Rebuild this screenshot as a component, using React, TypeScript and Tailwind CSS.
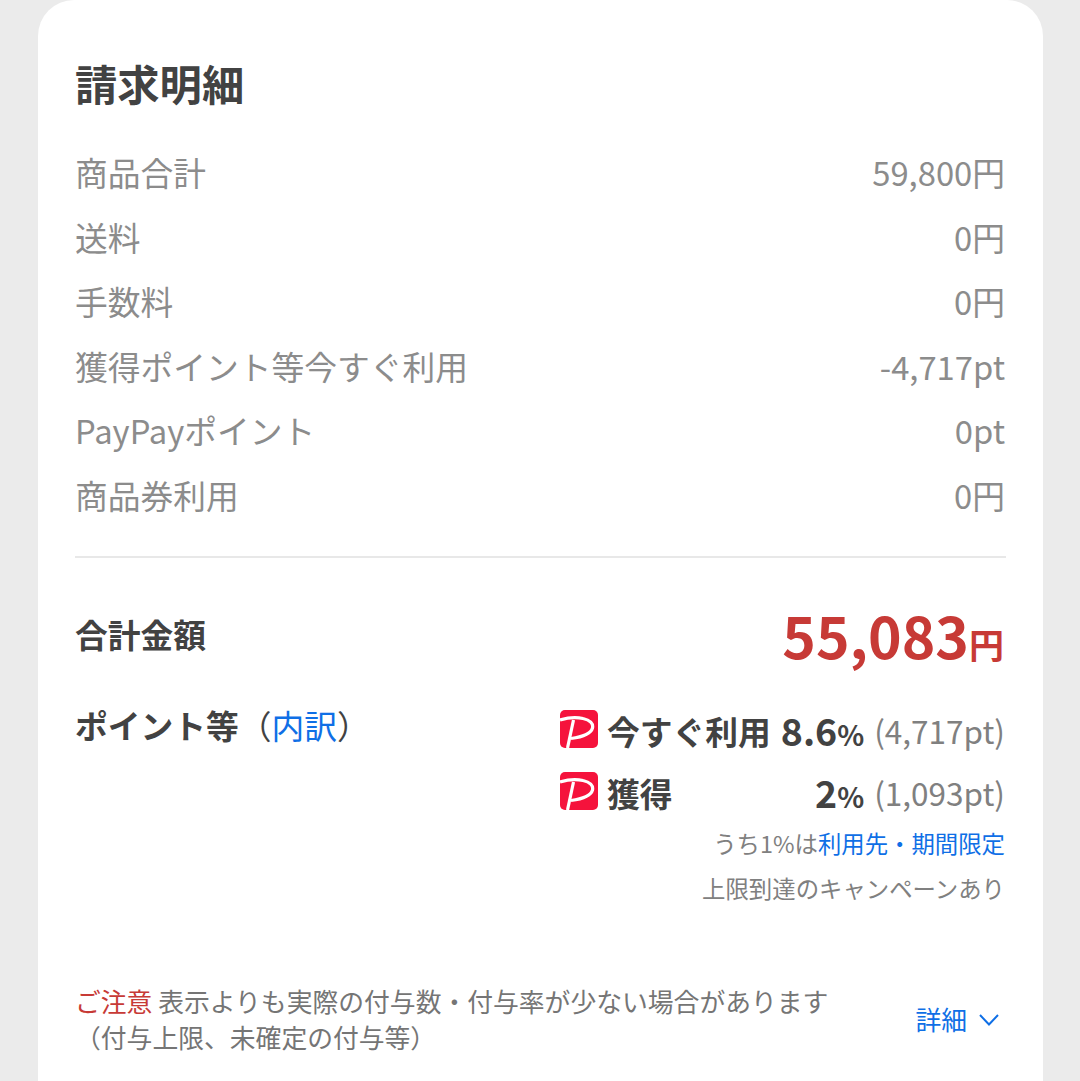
const jp = "font-['Noto_Sans_CJK_JP','Noto_Sans',sans-serif]"

const rows = [
  { label: "商品合計", value: "59,800円" },
  { label: "送料", value: "0円" },
  { label: "手数料", value: "0円" },
  { label: "獲得ポイント等今すぐ利用", value: "-4,717pt" },
  { label: "PayPayポイント", value: "0pt" },
  { label: "商品券利用", value: "0円" },
]

function PayPayIcon() {
  return (
    <svg width="38" height="38" viewBox="0 0 38 38" className="mt-[2px] shrink-0">
      <rect width="38" height="38" rx="5" fill="#f5133c" />
      <path
        d="M0 10C8 7.5 17 7 23 8.5C30 10 33.5 13.5 32.5 18C31 23.5 22 27 11 28.5"
        fill="none"
        stroke="#fff"
        strokeWidth="3.2"
      />
      <path d="M13.5 10L7.5 38" fill="none" stroke="#fff" strokeWidth="3.2" />
    </svg>
  )
}

export default function App() {
  return (
    <div className={`${jp} h-[1081px] overflow-hidden bg-[#ebebeb] pl-[38px] pr-[37px]`}>
      <div className="h-[1081px] overflow-hidden rounded-t-[36px] bg-white px-[37px] pt-[53px]">
        <h2 className="text-[42.3px] leading-[60px] font-bold text-[#424242]">請求明細</h2>

        <div className="mt-[27px] flex flex-col pr-[1px] text-[32.75px] leading-[64.6px] text-[#8c8c8c]">
          {rows.map((row) => (
            <div key={row.label} className="flex justify-between">
              <span>{row.label}</span>
              <span>{row.value}</span>
            </div>
          ))}
        </div>

        <div className="mt-[28px] h-[2px] bg-[#e8e8e8]" />

        <div className="mt-[27px] flex items-center justify-between pr-[2px]">
          <span className="pb-[4px] text-[32.75px] font-bold text-[#424242]">合計金額</span>
          <span className="pt-[14px] leading-[70px] font-bold text-[#c73a36]">
            <span className="text-[57px]">55,083</span>
            <span className="text-[35px]">円</span>
          </span>
        </div>

        <div className="mt-[10px] flex justify-between">
          <div className="pt-[3px] text-[32.75px] leading-[50px] font-bold text-[#424242]">
            ポイント等
            <span className="font-normal">（</span>
            <span className="font-normal text-[#0f6fe6]">内訳</span>
            <span className="font-normal">）</span>
          </div>

          <div className="flex w-[446px] flex-col">
            <div className="flex h-[62px] items-center pr-[1px]">
              <PayPayIcon />
              <span className="ml-[9px] pt-[6px] text-[32.75px] font-bold text-[#424242]">今すぐ利用</span>
              <span className="ml-auto pt-[6px] text-[37.5px] font-bold text-[#424242]">8.6<span className="text-[28px]">%</span></span>
              <span className="ml-[10px] pt-[6px] text-[31.5px] text-[#808080]">(4,717pt)</span>
            </div>
            <div className="flex h-[62px] items-center pr-[1px]">
              <PayPayIcon />
              <span className="ml-[9px] pt-[6px] text-[32.75px] font-bold text-[#424242]">獲得</span>
              <span className="ml-auto pt-[6px] text-[37.5px] font-bold text-[#424242]">2<span className="text-[28px]">%</span></span>
              <span className="ml-[10px] pt-[6px] text-[31.5px] text-[#808080]">(1,093pt)</span>
            </div>
            <div className="mt-[-1px] pr-[1px] text-right text-[23.4px] leading-[46px] text-[#808080]">
              うち1%は<span className="text-[#0f6fe6]">利用先・期間限定</span>
            </div>
            <div className="pr-[1px] text-right text-[23.4px] leading-[44px] text-[#808080]">
              上限到達のキャンペーンあり
            </div>
          </div>
        </div>

        <div className="mt-[73px] flex items-center justify-between">
          <p className="text-[25.8px] leading-[36px] text-[#757575]">
            <span className="text-[#c73a36]">ご注意</span> 表示よりも実際の付与数・付与率が少ない場合があります
            <br />
            （付与上限、未確定の付与等）
          </p>
          <div className="flex items-center gap-[11px] pt-[2px] pr-[6px] text-[25.8px] text-[#0f6fe6]">
            詳細
            <svg width="22" height="14" viewBox="0 0 22 14" fill="none" stroke="#0f6fe6" strokeWidth="2">
              <path d="M2 2L11 11.5L20 2" />
            </svg>
          </div>
        </div>
      </div>
    </div>
  )
}
